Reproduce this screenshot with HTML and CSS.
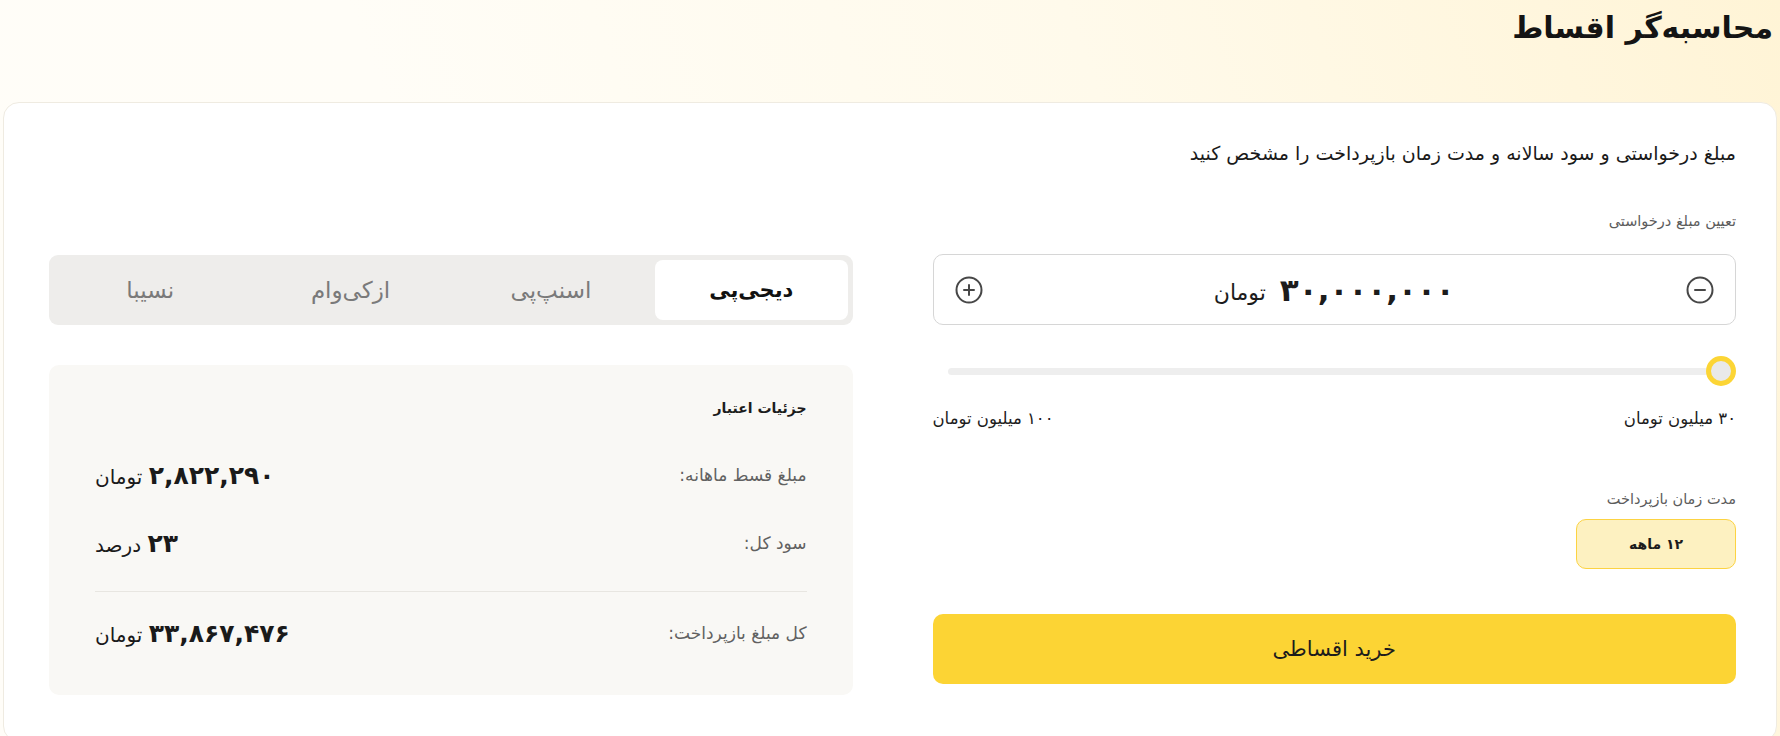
FILE: index.html
```html
<!DOCTYPE html>
<html lang="fa" dir="rtl">
<head>
    <meta charset="UTF-8">
    <meta name="viewport" content="width=device-width, initial-scale=1.0">
    <title>محاسبه‌گر اقساط</title>
    <link rel="stylesheet" href="styles.css">
</head>
<body>

<main class="page">
    <h1 class="page-title">محاسبه‌گر اقساط</h1>

    <section class="calc-card">
        <!-- Form column (right) -->
        <div class="calc-form">
            <p class="calc-intro">مبلغ درخواستی و سود سالانه و مدت زمان بازپرداخت را مشخص کنید</p>

            <div class="field-label first">تعیین مبلغ درخواستی</div>
            <div class="amount-box">
                <button class="step-btn" aria-label="کاهش">
                    <svg width="28" height="28" viewBox="0 0 28 28" fill="none" stroke="#474747" stroke-width="2" stroke-linecap="round">
                        <circle cx="14" cy="14" r="12.5"/>
                        <path d="M9 14h10"/>
                    </svg>
                </button>
                <div class="amount-value">
                    <span class="amount-number">۳۰,۰۰۰,۰۰۰</span>
                    <span class="amount-unit">تومان</span>
                </div>
                <button class="step-btn" aria-label="افزایش">
                    <svg width="28" height="28" viewBox="0 0 28 28" fill="none" stroke="#474747" stroke-width="2" stroke-linecap="round">
                        <circle cx="14" cy="14" r="12.5"/>
                        <path d="M9 14h10M14 9v10"/>
                    </svg>
                </button>
            </div>

            <div class="range">
                <div class="range-track"></div>
                <div class="range-thumb"></div>
            </div>
            <div class="range-labels">
                <span>۳۰ میلیون تومان</span>
                <span>۱۰۰ میلیون تومان</span>
            </div>

            <div class="field-label second">مدت زمان بازپرداخت</div>
            <div class="terms">
                <button class="term active">۱۲ ماهه</button>
            </div>

            <button class="buy-btn">خرید اقساطی</button>
        </div>

        <!-- Result column (left) -->
        <div class="calc-result">
            <div class="tabs">
                <button class="tab active">دیجی‌پی</button>
                <button class="tab">اسنپ‌پی</button>
                <button class="tab">ازکی‌وام</button>
                <button class="tab">نسیبا</button>
            </div>

            <div class="details">
                <div class="details-title">جزئیات اعتبار</div>
                <div class="details-row first">
                    <span class="row-label">مبلغ قسط ماهانه:</span>
                    <span class="row-value"><b>۲,۸۲۲,۲۹۰</b> تومان</span>
                </div>
                <div class="details-row">
                    <span class="row-label">سود کل:</span>
                    <span class="row-value"><b>۲۳</b> درصد</span>
                </div>
                <hr class="details-divider">
                <div class="details-row total">
                    <span class="row-label">کل مبلغ بازپرداخت:</span>
                    <span class="row-value"><b>۳۳,۸۶۷,۴۷۶</b> تومان</span>
                </div>
            </div>
        </div>
    </section>
</main>

</body>
</html>
```

FILE: styles.css
```css
body {
    margin: 0;
    font-family: "DejaVu Sans", "Noto Sans", sans-serif;
    color: #1c1c1c;
    background: linear-gradient(250deg, #fff4d6 0%, #fffaeb 35%, #fffdf7 70%, #fffdf8 100%);
    height: 736px;
    overflow: hidden;
}

button {
    font-family: inherit;
    border: none;
    background: none;
    cursor: pointer;
    padding: 0;
    color: inherit;
}

.page {
    padding: 0 3px;
}

.page-title {
    margin: 0;
    padding-right: 4px;
    font-size: 30px;
    line-height: 56px;
    font-weight: bold;
    color: #141414;
}

/* Main card */
.calc-card {
    margin-top: 46px;
    background: #fff;
    border: 1px solid #efebe1;
    border-radius: 16px;
    padding: 36px 40px 46px 45px;
    display: grid;
    grid-template-columns: 1fr 1fr;
    gap: 80px;
}

.calc-form {
    display: flex;
    flex-direction: column;
}

.calc-intro {
    margin: 0;
    font-size: 19px;
    line-height: 28px;
    color: #1a1a1a;
}

.field-label {
    font-size: 14.5px;
    line-height: 20px;
    color: #5c5c5c;
}

.field-label.first {
    margin-top: 44px;
}

.field-label.second {
    margin-top: 59px;
}

/* Amount input */
.amount-box {
    margin-top: 23px;
    height: 69px;
    border: 1px solid #d6d6d6;
    border-radius: 10px;
    display: flex;
    align-items: center;
    justify-content: space-between;
    padding: 0 21px 0 21px;
}

.step-btn {
    display: flex;
    width: 28px;
    height: 28px;
}

.amount-value {
    display: flex;
    align-items: center;
    gap: 14px;
}

.amount-number {
    font-size: 31px;
    font-weight: bold;
    letter-spacing: 1px;
}

.amount-unit {
    font-size: 22px;
    margin-top: 6px;
}

/* Slider */
.range {
    margin-top: 31px;
    height: 30px;
    display: flex;
    align-items: center;
    padding-left: 15px;
}

.range-track {
    flex: 1;
    height: 7px;
    border-radius: 4px;
    background: #eeeeee;
    margin-right: -2px;
}

.range-thumb {
    order: -1;
    width: 20px;
    height: 20px;
    border-radius: 50%;
    background: #e9e9e9;
    border: 5px solid #fcd535;
    position: relative;
    z-index: 1;
}

.range-labels {
    margin-top: 22px;
    display: flex;
    justify-content: space-between;
    font-size: 16.5px;
    line-height: 22px;
    color: #1c1c1c;
}

/* Term chips */
.terms {
    margin-top: 10px;
    display: flex;
}

.term {
    width: 160px;
    height: 50px;
    border-radius: 10px;
    font-size: 14px;
    font-weight: bold;
}

.term.active {
    background: #fdf1c1;
    border: 1px solid #fcd342;
}

.buy-btn {
    margin-top: 45px;
    height: 70px;
    border-radius: 10px;
    background: #fcd434;
    font-size: 21px;
    color: #1c1c1c;
}

/* Result column */
.calc-result {
    padding-top: 116px;
}

.tabs {
    height: 70px;
    box-sizing: border-box;
    background: #eeedeb;
    border-radius: 9px;
    padding: 5px;
    display: grid;
    grid-template-columns: repeat(4, 1fr);
    gap: 8px;
}

.tab {
    border-radius: 8px;
    font-size: 23px;
    color: #7a7a7a;
}

.tab.active {
    background: #fff;
    color: #111;
    font-size: 21px;
    font-weight: bold;
}

.details {
    margin-top: 40px;
    height: 330px;
    box-sizing: border-box;
    background: #f9f8f5;
    border-radius: 10px;
    padding: 31px 46px 0 46px;
}

.details-title {
    font-size: 14px;
    line-height: 24px;
    font-weight: bold;
}

.details-row {
    display: flex;
    justify-content: space-between;
    align-items: center;
    height: 36px;
    margin-top: 32px;
}

.details-row.first {
    margin-top: 37px;
}

.details-row.total {
    margin-top: 23px;
}

.row-label {
    font-size: 17px;
    color: #616161;
}

.row-value {
    font-size: 20px;
    color: #1a1a1a;
}

.row-value b {
    font-size: 25px;
}

.details-divider {
    margin: 30px 0 0;
    border: none;
    border-top: 1px solid #e8e6e1;
}
```
